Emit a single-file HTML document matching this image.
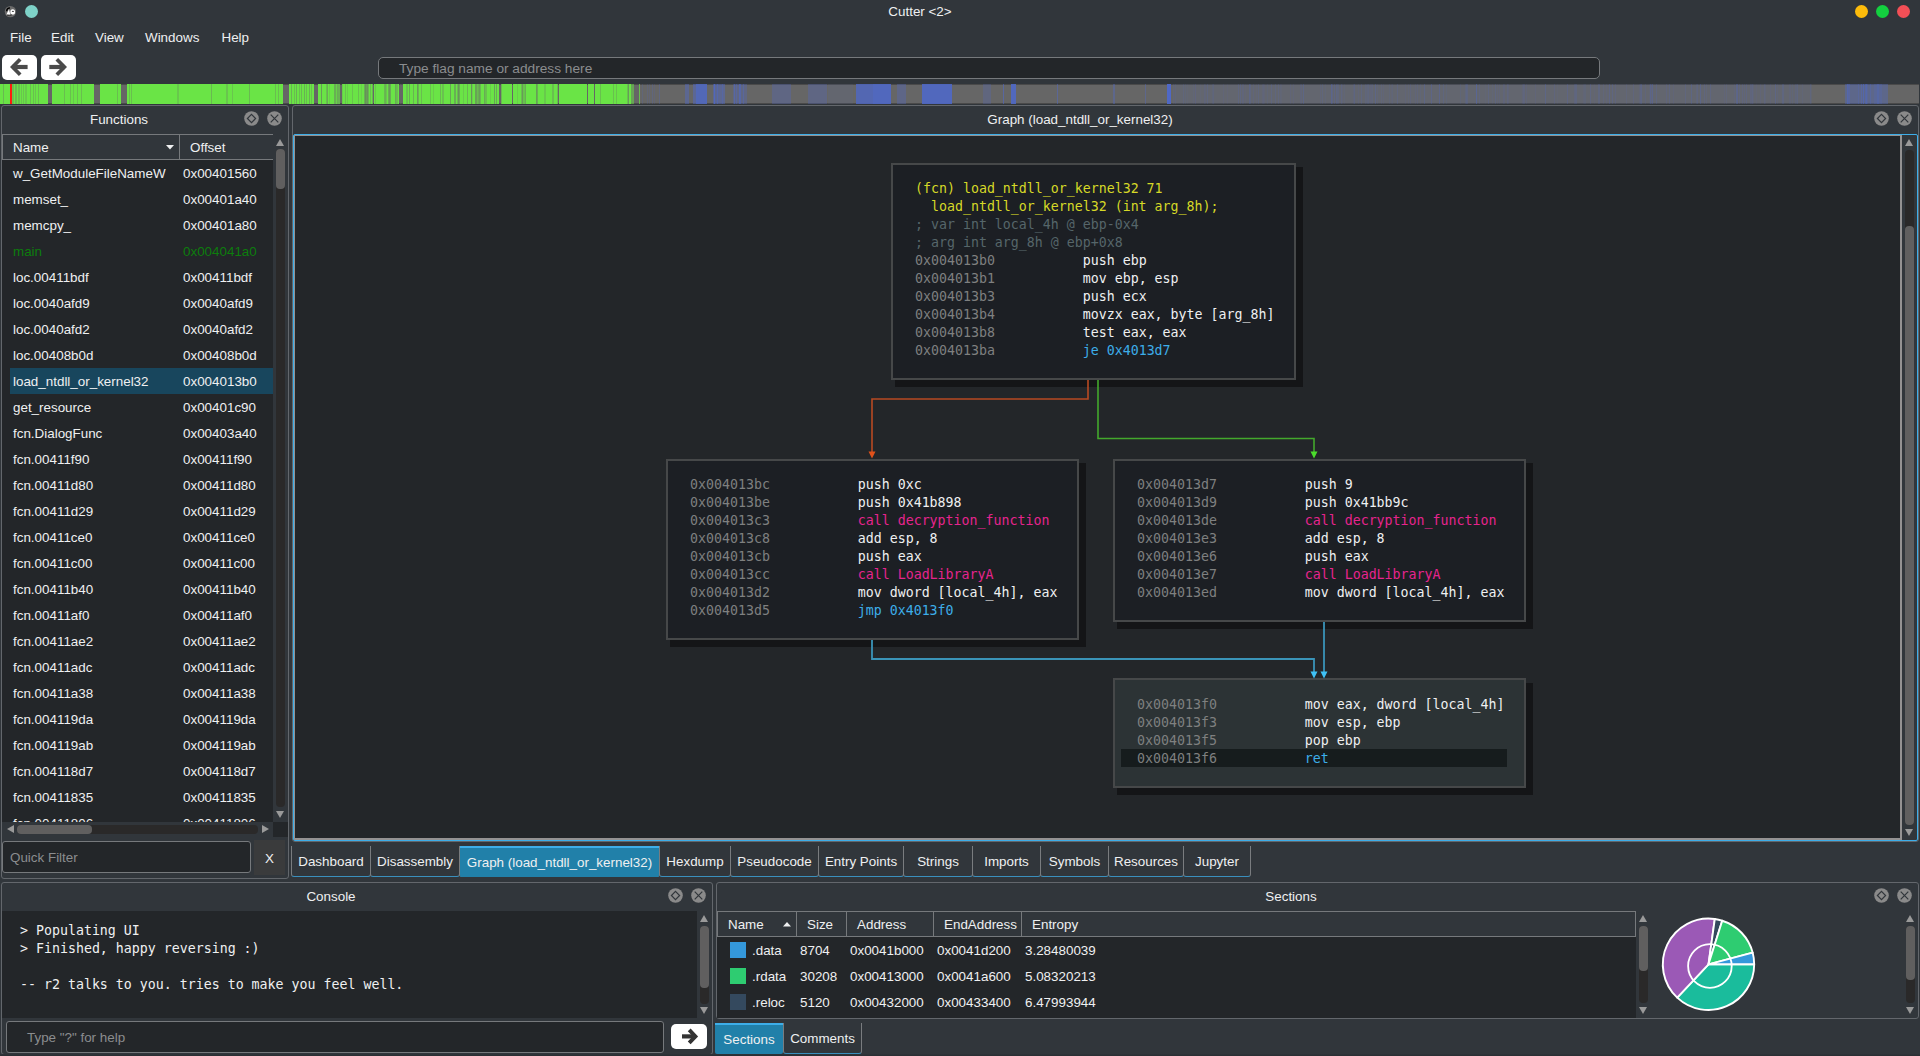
<!DOCTYPE html>
<html><head><meta charset="utf-8"><title>Cutter</title><style>
html,body{margin:0;padding:0;}
body{width:1920px;height:1056px;overflow:hidden;background:#31363b;color:#eff0f1;font-family:"Liberation Sans",sans-serif;font-size:13.4px;position:relative;}
.a{position:absolute;white-space:nowrap;}
.t{position:absolute;white-space:nowrap;line-height:16px;height:16px;}
.mono{font-family:"Liberation Mono",monospace;font-size:13.333px;}
.dock{position:absolute;border:1px solid #63676c;border-radius:3px;box-sizing:border-box;}
.hdr{position:absolute;box-sizing:border-box;border:1px solid #76797c;background:#31363b;height:26px;}
.ico{position:absolute;width:15px;height:15px;}
.sbv{position:absolute;width:9px;background:#2a2929;border-radius:4px;}
.sbh{position:absolute;width:9px;background:#605f5f;border-radius:4px;}
.tab{position:absolute;top:846px;height:31px;box-sizing:border-box;border:1px solid #797c7f;border-top:none;border-bottom:1px solid #3a8fbd;border-radius:0 0 3px 3px;text-align:center;line-height:31px;}
.tab.sel{background:#2180a9;border:none;border-top:2px solid #3daee9;line-height:29px;border-radius:0 0 2px 2px;height:31px}
.blk{position:absolute;box-sizing:border-box;border:2px solid #464849;background:#1c1f24;}
.shd{position:absolute;background:#141517;}
.ln{position:absolute;white-space:pre;line-height:18px;height:18px;font-family:"DejaVu Sans Mono","Liberation Mono",monospace;font-size:13.289px;}
.ad{color:#7f8080;} .y{color:#d6d927;} .cm{color:#56666a;} .w{color:#eff0f1;} .bl{color:#3daee9;} .pk{color:#e6248e;}
</style></head><body>
<svg class="a" style="left:4px;top:5px" width="13" height="13" viewBox="0 0 13 13"><circle cx="6.4" cy="6.6" r="5.7" fill="#6a6a6a"/><path d="M2.6 6.2 A3.6 3.6 0 0 1 6 2.9" stroke="#000" stroke-width="1.4" fill="none"/><path d="M2.4 9.4 L4.9 4.2 L6.3 9.6 Z" fill="#fff"/><ellipse cx="8.7" cy="6.9" rx="2.4" ry="2.7" fill="#fff"/><ellipse cx="8.9" cy="6.4" rx="1.1" ry="0.6" fill="#555"/><path d="M3 10.2 Q6 11.2 8 9.8" stroke="#3a3a3a" stroke-width="1" fill="none"/></svg>
<div class="a" style="left:25px;top:5px;width:13.4px;height:13.4px;border-radius:50%;background:#7ed2c8"></div>
<div class="t" style="left:820px;width:200px;text-align:center;top:4px;">Cutter &lt;2&gt;</div>
<div class="a" style="left:1854.75px;top:4.75px;width:13.5px;height:13.5px;border-radius:50%;background:#fdbc0b"></div>
<div class="a" style="left:1875.75px;top:4.75px;width:13.5px;height:13.5px;border-radius:50%;background:#13d03f"></div>
<div class="a" style="left:1896.75px;top:4.75px;width:13.5px;height:13.5px;border-radius:50%;background:#f34f56"></div>
<div class="t" style="left:10px;top:30px;">File</div>
<div class="t" style="left:51px;top:30px;">Edit</div>
<div class="t" style="left:95px;top:30px;">View</div>
<div class="t" style="left:145px;top:30px;">Windows</div>
<div class="t" style="left:221.5px;top:30px;">Help</div>
<div class="a" style="left:2px;top:55px;width:35px;height:25px;background:#fff;border-radius:5px;"><svg width="35" height="25" viewBox="0 0 35 25" style="position:absolute;left:0;top:0"><path d="M18.2 4.3 L10.6 12 L18.2 19.7" stroke="#4a4a4a" stroke-width="3.7" fill="none" stroke-linejoin="miter"/><path d="M10.5 12 H25.6" stroke="#4a4a4a" stroke-width="4.2" fill="none"/></svg></div>
<div class="a" style="left:41px;top:55px;width:35px;height:25px;background:#fff;border-radius:5px;"><svg width="35" height="25" viewBox="0 0 35 25" style="position:absolute;left:0;top:0"><path d="M15.8 4.3 L23.4 12 L15.8 19.7" stroke="#4a4a4a" stroke-width="3.7" fill="none" stroke-linejoin="miter"/><path d="M23.5 12 H8.3" stroke="#4a4a4a" stroke-width="4.2" fill="none"/></svg></div>
<div class="a" style="left:378px;top:57px;width:1222px;height:22px;box-sizing:border-box;border:1px solid #76797c;border-radius:5px;background:#232629;"></div>
<div class="t" style="left:399px;top:61px;color:#8b8d8f;font-size:13.7px">Type flag name or address here</div>
<div class="a" style="left:0;top:84px;width:1919px;height:20px;background:#666666;overflow:hidden">
<i class="a" style="left:0;top:0;width:1920px;height:1px;background:#4a4a4a"></i><i class="a" style="left:0;top:19px;width:1920px;height:1px;background:#4a4a4a"></i>
<i class="a" style="left:0px;top:0;width:48.3px;height:20px;background:#6ae446;opacity:1"></i>
<i class="a" style="left:52px;top:0;width:42.2px;height:20px;background:#6ae446;opacity:1"></i>
<i class="a" style="left:99.5px;top:0;width:21.3px;height:20px;background:#6ae446;opacity:1"></i>
<i class="a" style="left:127px;top:0;width:156.3px;height:20px;background:#6ae446;opacity:1"></i>
<i class="a" style="left:289.2px;top:0;width:24.8px;height:20px;background:#6ae446;opacity:1"></i>
<i class="a" style="left:317.5px;top:0;width:22.5px;height:20px;background:#6ae446;opacity:1"></i>
<i class="a" style="left:342px;top:0;width:30.5px;height:20px;background:#6ae446;opacity:1"></i>
<i class="a" style="left:374.3px;top:0;width:24.7px;height:20px;background:#6ae446;opacity:1"></i>
<i class="a" style="left:402.5px;top:0;width:96.5px;height:20px;background:#6ae446;opacity:1"></i>
<i class="a" style="left:501px;top:0;width:10.7px;height:20px;background:#6ae446;opacity:1"></i>
<i class="a" style="left:513px;top:0;width:45px;height:20px;background:#6ae446;opacity:1"></i>
<i class="a" style="left:559px;top:0;width:27.7px;height:20px;background:#6ae446;opacity:1"></i>
<i class="a" style="left:588px;top:0;width:5.7px;height:20px;background:#6ae446;opacity:1"></i>
<i class="a" style="left:595.2px;top:0;width:35.8px;height:20px;background:#6ae446;opacity:1"></i>
<i class="a" style="left:3.2px;top:0;width:0.7px;height:20px;background:#666666;opacity:0.35"></i>
<i class="a" style="left:12px;top:0;width:2px;height:20px;background:#666666;opacity:0.3"></i>
<i class="a" style="left:14.5px;top:0;width:0.8px;height:20px;background:#666666;opacity:0.35"></i>
<i class="a" style="left:16px;top:0;width:0.8px;height:20px;background:#666666;opacity:0.3"></i>
<i class="a" style="left:17.5px;top:0;width:1.0px;height:20px;background:#666666;opacity:0.3"></i>
<i class="a" style="left:19.2px;top:0;width:0.8px;height:20px;background:#666666;opacity:0.28"></i>
<i class="a" style="left:21px;top:0;width:1px;height:20px;background:#666666;opacity:0.25"></i>
<i class="a" style="left:22.8px;top:0;width:0.8px;height:20px;background:#666666;opacity:0.25"></i>
<i class="a" style="left:24.5px;top:0;width:0.8px;height:20px;background:#666666;opacity:0.2"></i>
<i class="a" style="left:26px;top:0;width:0.7px;height:20px;background:#666666;opacity:0.2"></i>
<i class="a" style="left:30px;top:0;width:0.6px;height:20px;background:#666666;opacity:0.3"></i>
<i class="a" style="left:33.2px;top:0;width:0.6px;height:20px;background:#666666;opacity:0.3"></i>
<i class="a" style="left:35px;top:0;width:0.6px;height:20px;background:#666666;opacity:0.25"></i>
<i class="a" style="left:38.3px;top:0;width:0.6px;height:20px;background:#666666;opacity:0.3"></i>
<i class="a" style="left:64px;top:0;width:0.6px;height:20px;background:#666666;opacity:0.3"></i>
<i class="a" style="left:69.5px;top:0;width:0.6px;height:20px;background:#666666;opacity:0.3"></i>
<i class="a" style="left:72.5px;top:0;width:0.6px;height:20px;background:#666666;opacity:0.25"></i>
<i class="a" style="left:76.5px;top:0;width:0.6px;height:20px;background:#666666;opacity:0.3"></i>
<i class="a" style="left:80.5px;top:0;width:0.6px;height:20px;background:#666666;opacity:0.3"></i>
<i class="a" style="left:116.5px;top:0;width:0.7px;height:20px;background:#666666;opacity:0.3"></i>
<i class="a" style="left:128.5px;top:0;width:0.6px;height:20px;background:#666666;opacity:0.3"></i>
<i class="a" style="left:131.3px;top:0;width:0.6px;height:20px;background:#666666;opacity:0.3"></i>
<i class="a" style="left:177px;top:0;width:2px;height:20px;background:#666666;opacity:0.22"></i>
<i class="a" style="left:210.8px;top:0;width:0.6px;height:20px;background:#666666;opacity:0.35"></i>
<i class="a" style="left:226.3px;top:0;width:1.8px;height:20px;background:#666666;opacity:0.25"></i>
<i class="a" style="left:232px;top:0;width:0.6px;height:20px;background:#666666;opacity:0.25"></i>
<i class="a" style="left:248.5px;top:0;width:0.6px;height:20px;background:#666666;opacity:0.35"></i>
<i class="a" style="left:274.5px;top:0;width:0.7px;height:20px;background:#666666;opacity:0.3"></i>
<i class="a" style="left:278px;top:0;width:0.6px;height:20px;background:#666666;opacity:0.3"></i>
<i class="a" style="left:291px;top:0;width:0.8px;height:20px;background:#666666;opacity:0.4"></i>
<i class="a" style="left:293.5px;top:0;width:0.8px;height:20px;background:#666666;opacity:0.3"></i>
<i class="a" style="left:296px;top:0;width:0.8px;height:20px;background:#666666;opacity:0.4"></i>
<i class="a" style="left:299px;top:0;width:0.8px;height:20px;background:#666666;opacity:0.3"></i>
<i class="a" style="left:301px;top:0;width:0.8px;height:20px;background:#666666;opacity:0.35"></i>
<i class="a" style="left:304px;top:0;width:0.8px;height:20px;background:#666666;opacity:0.4"></i>
<i class="a" style="left:306px;top:0;width:0.8px;height:20px;background:#666666;opacity:0.3"></i>
<i class="a" style="left:308.5px;top:0;width:0.8px;height:20px;background:#666666;opacity:0.4"></i>
<i class="a" style="left:311px;top:0;width:0.8px;height:20px;background:#666666;opacity:0.3"></i>
<i class="a" style="left:366.8px;top:0;width:0.8px;height:20px;background:#666666;opacity:0.35"></i>
<i class="a" style="left:486.3px;top:0;width:0.6px;height:20px;background:#666666;opacity:0.26"></i>
<i class="a" style="left:477.5px;top:0;width:0.6px;height:20px;background:#666666;opacity:0.16"></i>
<i class="a" style="left:341.7px;top:0;width:0.9px;height:20px;background:#666666;opacity:0.18"></i>
<i class="a" style="left:389.3px;top:0;width:0.6px;height:20px;background:#666666;opacity:0.34"></i>
<i class="a" style="left:498.6px;top:0;width:1.5px;height:20px;background:#666666;opacity:0.27"></i>
<i class="a" style="left:334.4px;top:0;width:1.6px;height:20px;background:#666666;opacity:0.41"></i>
<i class="a" style="left:364.7px;top:0;width:0.9px;height:20px;background:#666666;opacity:0.19"></i>
<i class="a" style="left:500.5px;top:0;width:0.7px;height:20px;background:#666666;opacity:0.34"></i>
<i class="a" style="left:489.9px;top:0;width:0.9px;height:20px;background:#666666;opacity:0.17"></i>
<i class="a" style="left:383.9px;top:0;width:0.6px;height:20px;background:#666666;opacity:0.35"></i>
<i class="a" style="left:417.4px;top:0;width:1.0px;height:20px;background:#666666;opacity:0.33"></i>
<i class="a" style="left:412.9px;top:0;width:1.0px;height:20px;background:#666666;opacity:0.39"></i>
<i class="a" style="left:395.6px;top:0;width:1.3px;height:20px;background:#666666;opacity:0.32"></i>
<i class="a" style="left:409.2px;top:0;width:1.3px;height:20px;background:#666666;opacity:0.44"></i>
<i class="a" style="left:449.8px;top:0;width:0.6px;height:20px;background:#666666;opacity:0.38"></i>
<i class="a" style="left:471.7px;top:0;width:0.7px;height:20px;background:#666666;opacity:0.16"></i>
<i class="a" style="left:556.8px;top:0;width:1.3px;height:20px;background:#666666;opacity:0.32"></i>
<i class="a" style="left:417.1px;top:0;width:1.5px;height:20px;background:#666666;opacity:0.36"></i>
<i class="a" style="left:499.7px;top:0;width:1.1px;height:20px;background:#666666;opacity:0.29"></i>
<i class="a" style="left:612.5px;top:0;width:1.4px;height:20px;background:#666666;opacity:0.29"></i>
<i class="a" style="left:338.8px;top:0;width:1.2px;height:20px;background:#666666;opacity:0.36"></i>
<i class="a" style="left:627.6px;top:0;width:1.3px;height:20px;background:#666666;opacity:0.4"></i>
<i class="a" style="left:439.7px;top:0;width:0.8px;height:20px;background:#666666;opacity:0.35"></i>
<i class="a" style="left:463.3px;top:0;width:0.6px;height:20px;background:#666666;opacity:0.2"></i>
<i class="a" style="left:338.3px;top:0;width:0.6px;height:20px;background:#666666;opacity:0.38"></i>
<i class="a" style="left:396.8px;top:0;width:0.7px;height:20px;background:#666666;opacity:0.27"></i>
<i class="a" style="left:344.9px;top:0;width:1.5px;height:20px;background:#666666;opacity:0.28"></i>
<i class="a" style="left:593.8px;top:0;width:1.1px;height:20px;background:#666666;opacity:0.4"></i>
<i class="a" style="left:406.2px;top:0;width:1.4px;height:20px;background:#666666;opacity:0.27"></i>
<i class="a" style="left:594.2px;top:0;width:0.9px;height:20px;background:#666666;opacity:0.44"></i>
<i class="a" style="left:374.7px;top:0;width:0.7px;height:20px;background:#666666;opacity:0.22"></i>
<i class="a" style="left:470.5px;top:0;width:0.7px;height:20px;background:#666666;opacity:0.33"></i>
<i class="a" style="left:321.3px;top:0;width:0.8px;height:20px;background:#666666;opacity:0.28"></i>
<i class="a" style="left:495.6px;top:0;width:0.9px;height:20px;background:#666666;opacity:0.44"></i>
<i class="a" style="left:479.7px;top:0;width:1.2px;height:20px;background:#666666;opacity:0.34"></i>
<i class="a" style="left:336.7px;top:0;width:1.3px;height:20px;background:#666666;opacity:0.42"></i>
<i class="a" style="left:441.5px;top:0;width:1.4px;height:20px;background:#666666;opacity:0.27"></i>
<i class="a" style="left:516.9px;top:0;width:0.6px;height:20px;background:#666666;opacity:0.17"></i>
<i class="a" style="left:384.8px;top:0;width:0.6px;height:20px;background:#666666;opacity:0.2"></i>
<i class="a" style="left:336.3px;top:0;width:0.9px;height:20px;background:#666666;opacity:0.15"></i>
<i class="a" style="left:351.5px;top:0;width:0.7px;height:20px;background:#666666;opacity:0.26"></i>
<i class="a" style="left:366.0px;top:0;width:1.2px;height:20px;background:#666666;opacity:0.23"></i>
<i class="a" style="left:432.9px;top:0;width:0.9px;height:20px;background:#666666;opacity:0.19"></i>
<i class="a" style="left:627.4px;top:0;width:1.5px;height:20px;background:#666666;opacity:0.29"></i>
<i class="a" style="left:346.6px;top:0;width:1.1px;height:20px;background:#666666;opacity:0.18"></i>
<i class="a" style="left:402.1px;top:0;width:0.9px;height:20px;background:#666666;opacity:0.4"></i>
<i class="a" style="left:327.2px;top:0;width:0.6px;height:20px;background:#666666;opacity:0.44"></i>
<i class="a" style="left:365.4px;top:0;width:1.1px;height:20px;background:#666666;opacity:0.31"></i>
<i class="a" style="left:484.0px;top:0;width:0.5px;height:20px;background:#666666;opacity:0.44"></i>
<i class="a" style="left:535.5px;top:0;width:1.5px;height:20px;background:#666666;opacity:0.23"></i>
<i class="a" style="left:371.8px;top:0;width:0.9px;height:20px;background:#666666;opacity:0.38"></i>
<i class="a" style="left:389.2px;top:0;width:0.8px;height:20px;background:#666666;opacity:0.39"></i>
<i class="a" style="left:390.2px;top:0;width:1.3px;height:20px;background:#666666;opacity:0.31"></i>
<i class="a" style="left:329.0px;top:0;width:0.9px;height:20px;background:#666666;opacity:0.16"></i>
<i class="a" style="left:400.4px;top:0;width:0.8px;height:20px;background:#666666;opacity:0.36"></i>
<i class="a" style="left:458.4px;top:0;width:1.5px;height:20px;background:#666666;opacity:0.43"></i>
<i class="a" style="left:615.5px;top:0;width:1.6px;height:20px;background:#666666;opacity:0.26"></i>
<i class="a" style="left:390.4px;top:0;width:0.7px;height:20px;background:#666666;opacity:0.21"></i>
<i class="a" style="left:522.4px;top:0;width:1.0px;height:20px;background:#666666;opacity:0.39"></i>
<i class="a" style="left:525.1px;top:0;width:0.5px;height:20px;background:#666666;opacity:0.42"></i>
<i class="a" style="left:552.3px;top:0;width:1.3px;height:20px;background:#666666;opacity:0.29"></i>
<i class="a" style="left:442.5px;top:0;width:1.6px;height:20px;background:#666666;opacity:0.27"></i>
<i class="a" style="left:544.3px;top:0;width:1.5px;height:20px;background:#666666;opacity:0.2"></i>
<i class="a" style="left:366.9px;top:0;width:0.7px;height:20px;background:#666666;opacity:0.42"></i>
<i class="a" style="left:365.3px;top:0;width:1.3px;height:20px;background:#666666;opacity:0.4"></i>
<i class="a" style="left:523.4px;top:0;width:1.6px;height:20px;background:#666666;opacity:0.26"></i>
<i class="a" style="left:360.6px;top:0;width:1.1px;height:20px;background:#666666;opacity:0.15"></i>
<i class="a" style="left:521.0px;top:0;width:1.6px;height:20px;background:#666666;opacity:0.31"></i>
<i class="a" style="left:454.3px;top:0;width:1.5px;height:20px;background:#666666;opacity:0.41"></i>
<i class="a" style="left:385.3px;top:0;width:1.4px;height:20px;background:#666666;opacity:0.23"></i>
<i class="a" style="left:394.6px;top:0;width:0.8px;height:20px;background:#666666;opacity:0.33"></i>
<i class="a" style="left:450.0px;top:0;width:0.8px;height:20px;background:#666666;opacity:0.19"></i>
<i class="a" style="left:429.5px;top:0;width:1.5px;height:20px;background:#666666;opacity:0.29"></i>
<i class="a" style="left:600.2px;top:0;width:1.1px;height:20px;background:#666666;opacity:0.28"></i>
<i class="a" style="left:475.3px;top:0;width:1.5px;height:20px;background:#666666;opacity:0.31"></i>
<i class="a" style="left:325.8px;top:0;width:1.1px;height:20px;background:#666666;opacity:0.28"></i>
<i class="a" style="left:321.2px;top:0;width:0.7px;height:20px;background:#666666;opacity:0.39"></i>
<i class="a" style="left:466.9px;top:0;width:0.7px;height:20px;background:#666666;opacity:0.37"></i>
<i class="a" style="left:421.0px;top:0;width:1.1px;height:20px;background:#666666;opacity:0.31"></i>
<i class="a" style="left:493.9px;top:0;width:0.6px;height:20px;background:#666666;opacity:0.22"></i>
<i class="a" style="left:494.1px;top:0;width:1.1px;height:20px;background:#666666;opacity:0.38"></i>
<i class="a" style="left:457.2px;top:0;width:1.5px;height:20px;background:#666666;opacity:0.33"></i>
<i class="a" style="left:478.7px;top:0;width:1.1px;height:20px;background:#666666;opacity:0.36"></i>
<i class="a" style="left:485.3px;top:0;width:1.0px;height:20px;background:#666666;opacity:0.29"></i>
<i class="a" style="left:536.4px;top:0;width:1.5px;height:20px;background:#666666;opacity:0.41"></i>
<i class="a" style="left:400.3px;top:0;width:1.6px;height:20px;background:#666666;opacity:0.32"></i>
<i class="a" style="left:357.7px;top:0;width:0.7px;height:20px;background:#666666;opacity:0.28"></i>
<i class="a" style="left:394.7px;top:0;width:0.6px;height:20px;background:#666666;opacity:0.17"></i>
<i class="a" style="left:367.8px;top:0;width:1.5px;height:20px;background:#666666;opacity:0.36"></i>
<i class="a" style="left:364.3px;top:0;width:1.2px;height:20px;background:#666666;opacity:0.41"></i>
<i class="a" style="left:387.9px;top:0;width:1.6px;height:20px;background:#666666;opacity:0.44"></i>
<i class="a" style="left:471.1px;top:0;width:0.9px;height:20px;background:#666666;opacity:0.45"></i>
<i class="a" style="left:370.0px;top:0;width:1.4px;height:20px;background:#666666;opacity:0.28"></i>
<i class="a" style="left:475px;top:0;width:5px;height:20px;background:#666666;opacity:0.3"></i>
<i class="a" style="left:10px;top:0;width:1.5px;height:20px;background:#ff1a0d;opacity:1"></i>
<i class="a" style="left:631px;top:0;width:3px;height:20px;background:#6ae446;opacity:0.5"></i>
<i class="a" style="left:639px;top:0;width:0.6px;height:20px;background:#6ae446;opacity:0.7"></i>
<i class="a" style="left:685px;top:0;width:4px;height:20px;background:#4f68c6;opacity:0.45"></i>
<i class="a" style="left:693px;top:0;width:3px;height:20px;background:#4f68c6;opacity:0.5"></i>
<i class="a" style="left:696px;top:0;width:10.7px;height:20px;background:#4f68c6;opacity:0.85"></i>
<i class="a" style="left:713px;top:0;width:12px;height:20px;background:#4f68c6;opacity:0.45"></i>
<i class="a" style="left:733px;top:0;width:14px;height:20px;background:#4f68c6;opacity:0.3"></i>
<i class="a" style="left:772px;top:0;width:19px;height:20px;background:#4f68c6;opacity:0.3"></i>
<i class="a" style="left:808px;top:0;width:19px;height:20px;background:#4f68c6;opacity:0.3"></i>
<i class="a" style="left:856px;top:0;width:17px;height:20px;background:#4f68c6;opacity:0.8"></i>
<i class="a" style="left:873px;top:0;width:18px;height:20px;background:#4f68c6;opacity:0.9"></i>
<i class="a" style="left:897px;top:0;width:9px;height:20px;background:#4f68c6;opacity:0.35"></i>
<i class="a" style="left:922px;top:0;width:30px;height:20px;background:#4f68c6;opacity:0.9"></i>
<i class="a" style="left:983px;top:0;width:8px;height:20px;background:#4f68c6;opacity:0.25"></i>
<i class="a" style="left:1002.5px;top:0;width:1.0px;height:20px;background:#4f68c6;opacity:0.6"></i>
<i class="a" style="left:1010.5px;top:0;width:5.5px;height:20px;background:#4f68c6;opacity:0.9"></i>
<i class="a" style="left:1057px;top:0;width:1px;height:20px;background:#4f68c6;opacity:0.5"></i>
<i class="a" style="left:1113px;top:0;width:2px;height:20px;background:#4f68c6;opacity:0.4"></i>
<i class="a" style="left:1145px;top:0;width:1px;height:20px;background:#4f68c6;opacity:0.4"></i>
<i class="a" style="left:1167px;top:0;width:4px;height:20px;background:#4f68c6;opacity:1.0"></i>
<i class="a" style="left:1845px;top:0;width:43px;height:20px;background:#4f68c6;opacity:0.38"></i>
<i class="a" style="left:1874px;top:0;width:8px;height:20px;background:#4f68c6;opacity:0.2"></i>
<i class="a" style="left:646.5px;top:0;width:0.8px;height:20px;background:#4f68c6;opacity:0.18"></i>
<i class="a" style="left:654.0px;top:0;width:0.6px;height:20px;background:#4f68c6;opacity:0.15"></i>
<i class="a" style="left:648.5px;top:0;width:0.7px;height:20px;background:#4f68c6;opacity:0.15"></i>
<i class="a" style="left:652.1px;top:0;width:0.6px;height:20px;background:#4f68c6;opacity:0.23"></i>
<i class="a" style="left:659.2px;top:0;width:0.5px;height:20px;background:#4f68c6;opacity:0.27"></i>
<i class="a" style="left:642.0px;top:0;width:1.0px;height:20px;background:#4f68c6;opacity:0.19"></i>
<i class="a" style="left:743.4px;top:0;width:0.6px;height:20px;background:#4f68c6;opacity:0.38"></i>
<i class="a" style="left:738.6px;top:0;width:0.7px;height:20px;background:#4f68c6;opacity:0.57"></i>
<i class="a" style="left:736.3px;top:0;width:1.1px;height:20px;background:#4f68c6;opacity:0.34"></i>
<i class="a" style="left:740.3px;top:0;width:1.2px;height:20px;background:#4f68c6;opacity:0.51"></i>
<i class="a" style="left:733.8px;top:0;width:0.6px;height:20px;background:#4f68c6;opacity:0.51"></i>
<i class="a" style="left:713.8px;top:0;width:0.9px;height:20px;background:#4f68c6;opacity:0.58"></i>
<i class="a" style="left:721.8px;top:0;width:1.0px;height:20px;background:#4f68c6;opacity:0.33"></i>
<i class="a" style="left:713.7px;top:0;width:1.1px;height:20px;background:#4f68c6;opacity:0.56"></i>
<i class="a" style="left:716.8px;top:0;width:0.8px;height:20px;background:#4f68c6;opacity:0.47"></i>
<i class="a" style="left:1173px;top:0;width:639px;height:20px;background:#4f68c6;opacity:0.1"></i>
<i class="a" style="left:828px;top:0;width:25px;height:20px;background:#4f68c6;opacity:0.1"></i>
<i class="a" style="left:1343.8px;top:0;width:1.3px;height:20px;background:#4f68c6;opacity:0.08"></i>
<i class="a" style="left:1325.1px;top:0;width:1.0px;height:20px;background:#4f68c6;opacity:0.08"></i>
<i class="a" style="left:1205.2px;top:0;width:0.6px;height:20px;background:#4f68c6;opacity:0.09"></i>
<i class="a" style="left:1367.7px;top:0;width:0.7px;height:20px;background:#4f68c6;opacity:0.17"></i>
<i class="a" style="left:1492.2px;top:0;width:0.7px;height:20px;background:#4f68c6;opacity:0.08"></i>
<i class="a" style="left:1184.6px;top:0;width:0.8px;height:20px;background:#4f68c6;opacity:0.1"></i>
<i class="a" style="left:1641.1px;top:0;width:0.5px;height:20px;background:#4f68c6;opacity:0.14"></i>
<i class="a" style="left:1476.1px;top:0;width:0.6px;height:20px;background:#4f68c6;opacity:0.19"></i>
<i class="a" style="left:1695.8px;top:0;width:0.6px;height:20px;background:#4f68c6;opacity:0.12"></i>
<i class="a" style="left:1705.6px;top:0;width:0.9px;height:20px;background:#4f68c6;opacity:0.12"></i>
<i class="a" style="left:1611.8px;top:0;width:0.9px;height:20px;background:#4f68c6;opacity:0.2"></i>
<i class="a" style="left:1704.2px;top:0;width:0.8px;height:20px;background:#4f68c6;opacity:0.16"></i>
<i class="a" style="left:1431.2px;top:0;width:1.0px;height:20px;background:#4f68c6;opacity:0.11"></i>
<i class="a" style="left:1255.9px;top:0;width:0.5px;height:20px;background:#4f68c6;opacity:0.07"></i>
<i class="a" style="left:1336.0px;top:0;width:1.1px;height:20px;background:#4f68c6;opacity:0.08"></i>
<i class="a" style="left:1710.1px;top:0;width:0.6px;height:20px;background:#4f68c6;opacity:0.18"></i>
<i class="a" style="left:1352.9px;top:0;width:1.0px;height:20px;background:#4f68c6;opacity:0.09"></i>
<i class="a" style="left:1466.3px;top:0;width:0.7px;height:20px;background:#4f68c6;opacity:0.08"></i>
<i class="a" style="left:1341.0px;top:0;width:0.8px;height:20px;background:#4f68c6;opacity:0.19"></i>
<i class="a" style="left:1521.9px;top:0;width:1.3px;height:20px;background:#4f68c6;opacity:0.09"></i>
<i class="a" style="left:1370.4px;top:0;width:1.3px;height:20px;background:#4f68c6;opacity:0.11"></i>
<i class="a" style="left:1416.7px;top:0;width:0.5px;height:20px;background:#4f68c6;opacity:0.13"></i>
<i class="a" style="left:1301.2px;top:0;width:0.9px;height:20px;background:#4f68c6;opacity:0.13"></i>
<i class="a" style="left:1341.7px;top:0;width:0.5px;height:20px;background:#4f68c6;opacity:0.07"></i>
<i class="a" style="left:1199.6px;top:0;width:0.8px;height:20px;background:#4f68c6;opacity:0.06"></i>
<i class="a" style="left:1321.6px;top:0;width:0.7px;height:20px;background:#4f68c6;opacity:0.14"></i>
<i class="a" style="left:1651.9px;top:0;width:0.9px;height:20px;background:#4f68c6;opacity:0.15"></i>
<i class="a" style="left:1733.8px;top:0;width:1.1px;height:20px;background:#4f68c6;opacity:0.11"></i>
<i class="a" style="left:1801.5px;top:0;width:0.8px;height:20px;background:#4f68c6;opacity:0.08"></i>
<i class="a" style="left:1583.3px;top:0;width:1.1px;height:20px;background:#4f68c6;opacity:0.07"></i>
<i class="a" style="left:1741.9px;top:0;width:1.2px;height:20px;background:#4f68c6;opacity:0.15"></i>
<i class="a" style="left:1691.1px;top:0;width:1.1px;height:20px;background:#4f68c6;opacity:0.08"></i>
<i class="a" style="left:1494.8px;top:0;width:0.9px;height:20px;background:#4f68c6;opacity:0.18"></i>
<i class="a" style="left:1700.1px;top:0;width:1.2px;height:20px;background:#4f68c6;opacity:0.14"></i>
<i class="a" style="left:1608.5px;top:0;width:1.3px;height:20px;background:#4f68c6;opacity:0.16"></i>
<i class="a" style="left:1192.9px;top:0;width:0.7px;height:20px;background:#4f68c6;opacity:0.08"></i>
<i class="a" style="left:1240.0px;top:0;width:0.7px;height:20px;background:#4f68c6;opacity:0.18"></i>
<i class="a" style="left:1573.5px;top:0;width:1.0px;height:20px;background:#4f68c6;opacity:0.15"></i>
<i class="a" style="left:1485.1px;top:0;width:1.1px;height:20px;background:#4f68c6;opacity:0.06"></i>
<i class="a" style="left:1650.3px;top:0;width:1.1px;height:20px;background:#4f68c6;opacity:0.13"></i>
<i class="a" style="left:1593.7px;top:0;width:0.9px;height:20px;background:#4f68c6;opacity:0.07"></i>
<i class="a" style="left:1333.9px;top:0;width:1.1px;height:20px;background:#4f68c6;opacity:0.07"></i>
<i class="a" style="left:1638.5px;top:0;width:0.7px;height:20px;background:#4f68c6;opacity:0.09"></i>
<i class="a" style="left:1795.4px;top:0;width:1.1px;height:20px;background:#4f68c6;opacity:0.13"></i>
<i class="a" style="left:1478.7px;top:0;width:0.8px;height:20px;background:#4f68c6;opacity:0.16"></i>
<i class="a" style="left:1566.6px;top:0;width:1.1px;height:20px;background:#4f68c6;opacity:0.15"></i>
<i class="a" style="left:1267.1px;top:0;width:0.6px;height:20px;background:#4f68c6;opacity:0.1"></i>
<i class="a" style="left:1367.2px;top:0;width:1.1px;height:20px;background:#4f68c6;opacity:0.14"></i>
<i class="a" style="left:1211.7px;top:0;width:0.5px;height:20px;background:#4f68c6;opacity:0.1"></i>
<i class="a" style="left:1614.6px;top:0;width:1.0px;height:20px;background:#4f68c6;opacity:0.15"></i>
<i class="a" style="left:1502.7px;top:0;width:0.7px;height:20px;background:#4f68c6;opacity:0.13"></i>
<i class="a" style="left:1248.6px;top:0;width:0.9px;height:20px;background:#4f68c6;opacity:0.19"></i>
<i class="a" style="left:1797.4px;top:0;width:0.6px;height:20px;background:#4f68c6;opacity:0.19"></i>
<i class="a" style="left:1466.0px;top:0;width:0.6px;height:20px;background:#4f68c6;opacity:0.17"></i>
<i class="a" style="left:1459.6px;top:0;width:1.3px;height:20px;background:#4f68c6;opacity:0.1"></i>
<i class="a" style="left:1776.6px;top:0;width:0.7px;height:20px;background:#4f68c6;opacity:0.09"></i>
<i class="a" style="left:1263.4px;top:0;width:1.0px;height:20px;background:#4f68c6;opacity:0.13"></i>
<i class="a" style="left:1257.6px;top:0;width:1.2px;height:20px;background:#4f68c6;opacity:0.17"></i>
<i class="a" style="left:1738.9px;top:0;width:0.9px;height:20px;background:#4f68c6;opacity:0.16"></i>
<i class="a" style="left:1746.0px;top:0;width:0.7px;height:20px;background:#4f68c6;opacity:0.13"></i>
<i class="a" style="left:1175.3px;top:0;width:0.5px;height:20px;background:#4f68c6;opacity:0.13"></i>
<i class="a" style="left:1365.7px;top:0;width:0.8px;height:20px;background:#4f68c6;opacity:0.08"></i>
<i class="a" style="left:1374.7px;top:0;width:0.8px;height:20px;background:#4f68c6;opacity:0.18"></i>
<i class="a" style="left:1652.3px;top:0;width:0.5px;height:20px;background:#4f68c6;opacity:0.18"></i>
<i class="a" style="left:1764.4px;top:0;width:0.6px;height:20px;background:#4f68c6;opacity:0.16"></i>
<i class="a" style="left:1357.8px;top:0;width:1.3px;height:20px;background:#4f68c6;opacity:0.11"></i>
<i class="a" style="left:1810.4px;top:0;width:0.8px;height:20px;background:#4f68c6;opacity:0.14"></i>
<i class="a" style="left:1446.2px;top:0;width:0.8px;height:20px;background:#4f68c6;opacity:0.1"></i>
<i class="a" style="left:1237.9px;top:0;width:0.6px;height:20px;background:#4f68c6;opacity:0.18"></i>
<i class="a" style="left:1770.2px;top:0;width:0.7px;height:20px;background:#4f68c6;opacity:0.09"></i>
<i class="a" style="left:1499.1px;top:0;width:0.8px;height:20px;background:#4f68c6;opacity:0.09"></i>
<i class="a" style="left:1783.2px;top:0;width:0.8px;height:20px;background:#4f68c6;opacity:0.18"></i>
<i class="a" style="left:1575.4px;top:0;width:1.2px;height:20px;background:#4f68c6;opacity:0.19"></i>
<i class="a" style="left:1523.3px;top:0;width:1.2px;height:20px;background:#4f68c6;opacity:0.16"></i>
<i class="a" style="left:1640.6px;top:0;width:0.5px;height:20px;background:#4f68c6;opacity:0.12"></i>
<i class="a" style="left:1584.1px;top:0;width:1.1px;height:20px;background:#4f68c6;opacity:0.1"></i>
<i class="a" style="left:1764.7px;top:0;width:0.6px;height:20px;background:#4f68c6;opacity:0.08"></i>
<i class="a" style="left:1392.3px;top:0;width:0.9px;height:20px;background:#4f68c6;opacity:0.1"></i>
<i class="a" style="left:1795.8px;top:0;width:1.1px;height:20px;background:#4f68c6;opacity:0.1"></i>
<i class="a" style="left:1364.9px;top:0;width:1.1px;height:20px;background:#4f68c6;opacity:0.14"></i>
<i class="a" style="left:1279.8px;top:0;width:0.8px;height:20px;background:#4f68c6;opacity:0.08"></i>
<i class="a" style="left:1751.3px;top:0;width:0.7px;height:20px;background:#4f68c6;opacity:0.13"></i>
<i class="a" style="left:1751.5px;top:0;width:0.7px;height:20px;background:#4f68c6;opacity:0.2"></i>
<i class="a" style="left:1262.1px;top:0;width:0.8px;height:20px;background:#4f68c6;opacity:0.09"></i>
<i class="a" style="left:1391.3px;top:0;width:0.6px;height:20px;background:#4f68c6;opacity:0.07"></i>
<i class="a" style="left:1337.9px;top:0;width:0.7px;height:20px;background:#4f68c6;opacity:0.14"></i>
<i class="a" style="left:1651.1px;top:0;width:1.2px;height:20px;background:#4f68c6;opacity:0.12"></i>
<i class="a" style="left:1507.5px;top:0;width:0.8px;height:20px;background:#4f68c6;opacity:0.11"></i>
<i class="a" style="left:1212.6px;top:0;width:0.8px;height:20px;background:#4f68c6;opacity:0.1"></i>
<i class="a" style="left:1253.3px;top:0;width:1.2px;height:20px;background:#4f68c6;opacity:0.13"></i>
<i class="a" style="left:1723.5px;top:0;width:1.0px;height:20px;background:#4f68c6;opacity:0.09"></i>
<i class="a" style="left:1331.6px;top:0;width:0.7px;height:20px;background:#4f68c6;opacity:0.12"></i>
<i class="a" style="left:1781.8px;top:0;width:0.8px;height:20px;background:#4f68c6;opacity:0.18"></i>
<i class="a" style="left:1186.9px;top:0;width:1.2px;height:20px;background:#4f68c6;opacity:0.06"></i>
<i class="a" style="left:1744.4px;top:0;width:1.1px;height:20px;background:#4f68c6;opacity:0.13"></i>
<i class="a" style="left:1173.1px;top:0;width:1.0px;height:20px;background:#4f68c6;opacity:0.11"></i>
<i class="a" style="left:1699.5px;top:0;width:1.3px;height:20px;background:#4f68c6;opacity:0.18"></i>
<i class="a" style="left:1331.5px;top:0;width:1.2px;height:20px;background:#4f68c6;opacity:0.08"></i>
<i class="a" style="left:1506.5px;top:0;width:0.6px;height:20px;background:#4f68c6;opacity:0.16"></i>
<i class="a" style="left:1633.3px;top:0;width:1.2px;height:20px;background:#4f68c6;opacity:0.15"></i>
<i class="a" style="left:1464.7px;top:0;width:1.1px;height:20px;background:#4f68c6;opacity:0.14"></i>
<i class="a" style="left:1672.5px;top:0;width:0.5px;height:20px;background:#4f68c6;opacity:0.09"></i>
<i class="a" style="left:1584.7px;top:0;width:1.2px;height:20px;background:#4f68c6;opacity:0.1"></i>
<i class="a" style="left:1333.7px;top:0;width:0.6px;height:20px;background:#4f68c6;opacity:0.15"></i>
<i class="a" style="left:1244.5px;top:0;width:1.1px;height:20px;background:#4f68c6;opacity:0.07"></i>
<i class="a" style="left:1544.9px;top:0;width:1.0px;height:20px;background:#4f68c6;opacity:0.11"></i>
<i class="a" style="left:1556.7px;top:0;width:0.6px;height:20px;background:#4f68c6;opacity:0.06"></i>
<i class="a" style="left:1467.0px;top:0;width:0.8px;height:20px;background:#4f68c6;opacity:0.19"></i>
<i class="a" style="left:1736.8px;top:0;width:1.0px;height:20px;background:#4f68c6;opacity:0.13"></i>
<i class="a" style="left:1330.7px;top:0;width:0.7px;height:20px;background:#4f68c6;opacity:0.19"></i>
<i class="a" style="left:1369.1px;top:0;width:1.1px;height:20px;background:#4f68c6;opacity:0.06"></i>
<i class="a" style="left:1603.4px;top:0;width:0.9px;height:20px;background:#4f68c6;opacity:0.12"></i>
<i class="a" style="left:1599.0px;top:0;width:0.7px;height:20px;background:#4f68c6;opacity:0.19"></i>
<i class="a" style="left:1194.8px;top:0;width:0.6px;height:20px;background:#4f68c6;opacity:0.11"></i>
<i class="a" style="left:1608.6px;top:0;width:0.8px;height:20px;background:#4f68c6;opacity:0.09"></i>
<i class="a" style="left:1644.5px;top:0;width:1.1px;height:20px;background:#4f68c6;opacity:0.13"></i>
<i class="a" style="left:1792.1px;top:0;width:0.7px;height:20px;background:#4f68c6;opacity:0.1"></i>
<i class="a" style="left:1320.2px;top:0;width:1.2px;height:20px;background:#4f68c6;opacity:0.09"></i>
<i class="a" style="left:1361.1px;top:0;width:1.1px;height:20px;background:#4f68c6;opacity:0.19"></i>
<i class="a" style="left:1292.5px;top:0;width:0.9px;height:20px;background:#4f68c6;opacity:0.09"></i>
<i class="a" style="left:1597.6px;top:0;width:0.8px;height:20px;background:#4f68c6;opacity:0.19"></i>
<i class="a" style="left:1424.2px;top:0;width:0.6px;height:20px;background:#4f68c6;opacity:0.09"></i>
<i class="a" style="left:1263.5px;top:0;width:1.3px;height:20px;background:#4f68c6;opacity:0.07"></i>
<i class="a" style="left:1424.1px;top:0;width:0.6px;height:20px;background:#4f68c6;opacity:0.19"></i>
<i class="a" style="left:1640.3px;top:0;width:1.2px;height:20px;background:#4f68c6;opacity:0.2"></i>
<i class="a" style="left:1383.0px;top:0;width:1.2px;height:20px;background:#4f68c6;opacity:0.09"></i>
<i class="a" style="left:1649.0px;top:0;width:1.2px;height:20px;background:#4f68c6;opacity:0.06"></i>
<i class="a" style="left:1414.5px;top:0;width:1.1px;height:20px;background:#4f68c6;opacity:0.11"></i>
<i class="a" style="left:1281.0px;top:0;width:0.8px;height:20px;background:#4f68c6;opacity:0.06"></i>
<i class="a" style="left:1397.3px;top:0;width:0.8px;height:20px;background:#4f68c6;opacity:0.19"></i>
<i class="a" style="left:1788.6px;top:0;width:0.6px;height:20px;background:#4f68c6;opacity:0.09"></i>
<i class="a" style="left:1697.3px;top:0;width:0.8px;height:20px;background:#4f68c6;opacity:0.18"></i>
<i class="a" style="left:1204.4px;top:0;width:0.9px;height:20px;background:#4f68c6;opacity:0.13"></i>
<i class="a" style="left:1759.8px;top:0;width:0.8px;height:20px;background:#4f68c6;opacity:0.09"></i>
<i class="a" style="left:1745.5px;top:0;width:0.8px;height:20px;background:#4f68c6;opacity:0.06"></i>
<i class="a" style="left:1691.1px;top:0;width:0.8px;height:20px;background:#4f68c6;opacity:0.17"></i>
<i class="a" style="left:1195.3px;top:0;width:0.5px;height:20px;background:#4f68c6;opacity:0.07"></i>
<i class="a" style="left:1336.9px;top:0;width:1.3px;height:20px;background:#4f68c6;opacity:0.16"></i>
<i class="a" style="left:1389.3px;top:0;width:1.2px;height:20px;background:#4f68c6;opacity:0.1"></i>
<i class="a" style="left:1566.5px;top:0;width:1.2px;height:20px;background:#4f68c6;opacity:0.1"></i>
<i class="a" style="left:1374.9px;top:0;width:1.1px;height:20px;background:#4f68c6;opacity:0.1"></i>
<i class="a" style="left:1655.5px;top:0;width:0.5px;height:20px;background:#4f68c6;opacity:0.19"></i>
<i class="a" style="left:1774.8px;top:0;width:1.0px;height:20px;background:#4f68c6;opacity:0.06"></i>
<i class="a" style="left:1476.3px;top:0;width:0.7px;height:20px;background:#4f68c6;opacity:0.19"></i>
<i class="a" style="left:1419.5px;top:0;width:1.3px;height:20px;background:#4f68c6;opacity:0.1"></i>
<i class="a" style="left:1487.9px;top:0;width:0.9px;height:20px;background:#4f68c6;opacity:0.19"></i>
<i class="a" style="left:1685.3px;top:0;width:0.7px;height:20px;background:#4f68c6;opacity:0.16"></i>
<i class="a" style="left:1665.9px;top:0;width:1.2px;height:20px;background:#4f68c6;opacity:0.15"></i>
<i class="a" style="left:1376.9px;top:0;width:0.8px;height:20px;background:#4f68c6;opacity:0.11"></i>
<i class="a" style="left:1223.4px;top:0;width:1.1px;height:20px;background:#4f68c6;opacity:0.09"></i>
<i class="a" style="left:1330.8px;top:0;width:1.1px;height:20px;background:#4f68c6;opacity:0.07"></i>
<i class="a" style="left:1525.8px;top:0;width:0.5px;height:20px;background:#4f68c6;opacity:0.11"></i>
<i class="a" style="left:1736.4px;top:0;width:1.3px;height:20px;background:#4f68c6;opacity:0.2"></i>
<i class="a" style="left:1226.7px;top:0;width:0.7px;height:20px;background:#4f68c6;opacity:0.07"></i>
<i class="a" style="left:1625.9px;top:0;width:0.9px;height:20px;background:#4f68c6;opacity:0.12"></i>
<i class="a" style="left:1439.1px;top:0;width:0.7px;height:20px;background:#4f68c6;opacity:0.15"></i>
<i class="a" style="left:1650.2px;top:0;width:1.0px;height:20px;background:#4f68c6;opacity:0.18"></i>
<i class="a" style="left:1250.3px;top:0;width:1.0px;height:20px;background:#4f68c6;opacity:0.18"></i>
<i class="a" style="left:1534.8px;top:0;width:0.8px;height:20px;background:#4f68c6;opacity:0.11"></i>
<i class="a" style="left:1300.1px;top:0;width:1.1px;height:20px;background:#4f68c6;opacity:0.09"></i>
<i class="a" style="left:1270.9px;top:0;width:0.7px;height:20px;background:#4f68c6;opacity:0.18"></i>
<i class="a" style="left:1381.2px;top:0;width:1.0px;height:20px;background:#4f68c6;opacity:0.12"></i>
<i class="a" style="left:1496.5px;top:0;width:1.3px;height:20px;background:#4f68c6;opacity:0.09"></i>
<i class="a" style="left:1589.7px;top:0;width:1.2px;height:20px;background:#4f68c6;opacity:0.2"></i>
<i class="a" style="left:1476.1px;top:0;width:0.6px;height:20px;background:#4f68c6;opacity:0.17"></i>
<i class="a" style="left:1756.2px;top:0;width:1.2px;height:20px;background:#4f68c6;opacity:0.07"></i>
<i class="a" style="left:1249.1px;top:0;width:0.7px;height:20px;background:#4f68c6;opacity:0.09"></i>
<i class="a" style="left:1544.9px;top:0;width:1.3px;height:20px;background:#4f68c6;opacity:0.19"></i>
<i class="a" style="left:1725.8px;top:0;width:0.8px;height:20px;background:#4f68c6;opacity:0.12"></i>
<i class="a" style="left:1669.4px;top:0;width:0.8px;height:20px;background:#4f68c6;opacity:0.19"></i>
<i class="a" style="left:1553.6px;top:0;width:0.6px;height:20px;background:#4f68c6;opacity:0.15"></i>
<i class="a" style="left:1408.4px;top:0;width:0.6px;height:20px;background:#4f68c6;opacity:0.08"></i>
<i class="a" style="left:1335.7px;top:0;width:0.7px;height:20px;background:#4f68c6;opacity:0.14"></i>
<i class="a" style="left:1302.8px;top:0;width:1.0px;height:20px;background:#4f68c6;opacity:0.06"></i>
<i class="a" style="left:1605.9px;top:0;width:0.8px;height:20px;background:#4f68c6;opacity:0.09"></i>
<i class="a" style="left:1302.8px;top:0;width:0.8px;height:20px;background:#4f68c6;opacity:0.17"></i>
<i class="a" style="left:1213.4px;top:0;width:0.9px;height:20px;background:#4f68c6;opacity:0.07"></i>
<i class="a" style="left:1524.1px;top:0;width:0.8px;height:20px;background:#4f68c6;opacity:0.15"></i>
<i class="a" style="left:1277.5px;top:0;width:0.6px;height:20px;background:#4f68c6;opacity:0.16"></i>
<i class="a" style="left:1353.8px;top:0;width:0.8px;height:20px;background:#4f68c6;opacity:0.1"></i>
<i class="a" style="left:1372.2px;top:0;width:1.3px;height:20px;background:#4f68c6;opacity:0.14"></i>
<i class="a" style="left:1438.8px;top:0;width:0.8px;height:20px;background:#4f68c6;opacity:0.18"></i>
<i class="a" style="left:1405.0px;top:0;width:1.3px;height:20px;background:#4f68c6;opacity:0.09"></i>
<i class="a" style="left:1302.9px;top:0;width:1.1px;height:20px;background:#4f68c6;opacity:0.06"></i>
<i class="a" style="left:1443.3px;top:0;width:1.2px;height:20px;background:#4f68c6;opacity:0.17"></i>
<i class="a" style="left:1736.4px;top:0;width:0.8px;height:20px;background:#4f68c6;opacity:0.12"></i>
<i class="a" style="left:1182.5px;top:0;width:0.6px;height:20px;background:#4f68c6;opacity:0.14"></i>
<i class="a" style="left:1753.4px;top:0;width:1.1px;height:20px;background:#4f68c6;opacity:0.07"></i>
<i class="a" style="left:1409.6px;top:0;width:1.0px;height:20px;background:#4f68c6;opacity:0.13"></i>
<i class="a" style="left:1353.9px;top:0;width:0.6px;height:20px;background:#4f68c6;opacity:0.13"></i>
<i class="a" style="left:1242.4px;top:0;width:1.2px;height:20px;background:#4f68c6;opacity:0.13"></i>
<i class="a" style="left:1789.7px;top:0;width:1.2px;height:20px;background:#4f68c6;opacity:0.09"></i>
<i class="a" style="left:1775.1px;top:0;width:0.6px;height:20px;background:#4f68c6;opacity:0.2"></i>
<i class="a" style="left:1207.1px;top:0;width:0.8px;height:20px;background:#4f68c6;opacity:0.19"></i>
<i class="a" style="left:1750.1px;top:0;width:0.8px;height:20px;background:#4f68c6;opacity:0.15"></i>
<i class="a" style="left:1275.2px;top:0;width:1.2px;height:20px;background:#4f68c6;opacity:0.17"></i>
<i class="a" style="left:1431.2px;top:0;width:0.7px;height:20px;background:#4f68c6;opacity:0.18"></i>
<i class="a" style="left:1289.7px;top:0;width:1.2px;height:20px;background:#4f68c6;opacity:0.09"></i>
<i class="a" style="left:1503.5px;top:0;width:0.8px;height:20px;background:#4f68c6;opacity:0.11"></i>
<i class="a" style="left:1330.7px;top:0;width:0.6px;height:20px;background:#4f68c6;opacity:0.16"></i>
<i class="a" style="left:1846.7px;top:0;width:1.8px;height:20px;background:#4f68c6;opacity:0.31"></i>
<i class="a" style="left:1846.6px;top:0;width:1.6px;height:20px;background:#4f68c6;opacity:0.37"></i>
<i class="a" style="left:1870.3px;top:0;width:0.8px;height:20px;background:#4f68c6;opacity:0.31"></i>
<i class="a" style="left:1857.7px;top:0;width:1.5px;height:20px;background:#4f68c6;opacity:0.28"></i>
<i class="a" style="left:1862.7px;top:0;width:1.4px;height:20px;background:#4f68c6;opacity:0.33"></i>
<i class="a" style="left:1863.3px;top:0;width:1.2px;height:20px;background:#4f68c6;opacity:0.2"></i>
<i class="a" style="left:1865.3px;top:0;width:1.5px;height:20px;background:#4f68c6;opacity:0.25"></i>
<i class="a" style="left:1877.2px;top:0;width:1.7px;height:20px;background:#4f68c6;opacity:0.29"></i>
<i class="a" style="left:1864.9px;top:0;width:0.9px;height:20px;background:#4f68c6;opacity:0.22"></i>
<i class="a" style="left:1863.2px;top:0;width:0.8px;height:20px;background:#4f68c6;opacity:0.22"></i>
<i class="a" style="left:1866.3px;top:0;width:1.2px;height:20px;background:#4f68c6;opacity:0.21"></i>
<i class="a" style="left:1848.4px;top:0;width:1.5px;height:20px;background:#4f68c6;opacity:0.35"></i>
<i class="a" style="left:1866.1px;top:0;width:1.7px;height:20px;background:#4f68c6;opacity:0.21"></i>
<i class="a" style="left:1860.8px;top:0;width:1.3px;height:20px;background:#4f68c6;opacity:0.39"></i>
</div>
<div class="dock" style="left:1px;top:105px;width:288px;height:774px;"></div>
<div class="t" style="left:19px;width:200px;text-align:center;top:111.5px;">Functions</div>
<svg class="ico" style="left:243.5px;top:110.8px" viewBox="0 0 15 15"><circle cx="7.5" cy="7.5" r="7.3" fill="#8a8a8a"/><path d="M7.5 3.4 L11.6 7.5 L7.5 11.6 L3.4 7.5 Z" fill="none" stroke="#31363b" stroke-width="1.2"/></svg>
<svg class="ico" style="left:266.5px;top:110.8px" viewBox="0 0 15 15"><circle cx="7.5" cy="7.5" r="7.3" fill="#8a8a8a"/><path d="M3.7 3.7 L11.3 11.3 M11.3 3.7 L3.7 11.3" fill="none" stroke="#31363b" stroke-width="1.2"/></svg>
<div class="a" style="left:2px;top:134px;width:271px;height:688px;background:#232629;overflow:hidden">
<div class="hdr" style="left:0;top:0;width:178px;"></div><div class="hdr" style="left:177px;top:0;width:95px;border-right:none"></div>
<div class="t" style="left:11px;top:6px;">Name</div><div class="t" style="left:188px;top:6px;">Offset</div>
<svg class="a" style="left:163.5px;top:11px" width="8" height="5"><polygon points="0,0 8,0 4,4.6" fill="#eff0f1"/></svg>
<div class="t" style="left:11px;top:32px;color:#eff0f1">w_GetModuleFileNameW</div><div class="t" style="left:181px;top:32px;color:#eff0f1">0x00401560</div>
<div class="t" style="left:11px;top:58px;color:#eff0f1">memset_</div><div class="t" style="left:181px;top:58px;color:#eff0f1">0x00401a40</div>
<div class="t" style="left:11px;top:84px;color:#eff0f1">memcpy_</div><div class="t" style="left:181px;top:84px;color:#eff0f1">0x00401a80</div>
<div class="t" style="left:11px;top:110px;color:#0d7d0d">main</div><div class="t" style="left:181px;top:110px;color:#0d7d0d">0x004041a0</div>
<div class="t" style="left:11px;top:136px;color:#eff0f1">loc.00411bdf</div><div class="t" style="left:181px;top:136px;color:#eff0f1">0x00411bdf</div>
<div class="t" style="left:11px;top:162px;color:#eff0f1">loc.0040afd9</div><div class="t" style="left:181px;top:162px;color:#eff0f1">0x0040afd9</div>
<div class="t" style="left:11px;top:188px;color:#eff0f1">loc.0040afd2</div><div class="t" style="left:181px;top:188px;color:#eff0f1">0x0040afd2</div>
<div class="t" style="left:11px;top:214px;color:#eff0f1">loc.00408b0d</div><div class="t" style="left:181px;top:214px;color:#eff0f1">0x00408b0d</div>
<div class="a" style="left:8px;top:234px;width:263px;height:26px;background:#18465d"></div>
<div class="t" style="left:11px;top:240px;color:#eff0f1">load_ntdll_or_kernel32</div><div class="t" style="left:181px;top:240px;color:#eff0f1">0x004013b0</div>
<div class="t" style="left:11px;top:266px;color:#eff0f1">get_resource</div><div class="t" style="left:181px;top:266px;color:#eff0f1">0x00401c90</div>
<div class="t" style="left:11px;top:292px;color:#eff0f1">fcn.DialogFunc</div><div class="t" style="left:181px;top:292px;color:#eff0f1">0x00403a40</div>
<div class="t" style="left:11px;top:318px;color:#eff0f1">fcn.00411f90</div><div class="t" style="left:181px;top:318px;color:#eff0f1">0x00411f90</div>
<div class="t" style="left:11px;top:344px;color:#eff0f1">fcn.00411d80</div><div class="t" style="left:181px;top:344px;color:#eff0f1">0x00411d80</div>
<div class="t" style="left:11px;top:370px;color:#eff0f1">fcn.00411d29</div><div class="t" style="left:181px;top:370px;color:#eff0f1">0x00411d29</div>
<div class="t" style="left:11px;top:396px;color:#eff0f1">fcn.00411ce0</div><div class="t" style="left:181px;top:396px;color:#eff0f1">0x00411ce0</div>
<div class="t" style="left:11px;top:422px;color:#eff0f1">fcn.00411c00</div><div class="t" style="left:181px;top:422px;color:#eff0f1">0x00411c00</div>
<div class="t" style="left:11px;top:448px;color:#eff0f1">fcn.00411b40</div><div class="t" style="left:181px;top:448px;color:#eff0f1">0x00411b40</div>
<div class="t" style="left:11px;top:474px;color:#eff0f1">fcn.00411af0</div><div class="t" style="left:181px;top:474px;color:#eff0f1">0x00411af0</div>
<div class="t" style="left:11px;top:500px;color:#eff0f1">fcn.00411ae2</div><div class="t" style="left:181px;top:500px;color:#eff0f1">0x00411ae2</div>
<div class="t" style="left:11px;top:526px;color:#eff0f1">fcn.00411adc</div><div class="t" style="left:181px;top:526px;color:#eff0f1">0x00411adc</div>
<div class="t" style="left:11px;top:552px;color:#eff0f1">fcn.00411a38</div><div class="t" style="left:181px;top:552px;color:#eff0f1">0x00411a38</div>
<div class="t" style="left:11px;top:578px;color:#eff0f1">fcn.004119da</div><div class="t" style="left:181px;top:578px;color:#eff0f1">0x004119da</div>
<div class="t" style="left:11px;top:604px;color:#eff0f1">fcn.004119ab</div><div class="t" style="left:181px;top:604px;color:#eff0f1">0x004119ab</div>
<div class="t" style="left:11px;top:630px;color:#eff0f1">fcn.004118d7</div><div class="t" style="left:181px;top:630px;color:#eff0f1">0x004118d7</div>
<div class="t" style="left:11px;top:656px;color:#eff0f1">fcn.00411835</div><div class="t" style="left:181px;top:656px;color:#eff0f1">0x00411835</div>
<div class="t" style="left:11px;top:682px;color:#eff0f1">fcn.00411806</div><div class="t" style="left:181px;top:682px;color:#eff0f1">0x00411806</div>
</div>
<svg class="a" style="left:276px;top:138.5px" width="8" height="7"><polygon points="4.0,0 8,7 0,7" fill="#9a9a9a"/></svg>
<div class="sbv" style="left:276px;top:149px;height:658px;"></div><div class="sbh" style="left:276px;top:149px;height:40px;"></div>
<svg class="a" style="left:276px;top:810.5px" width="8" height="7"><polygon points="0,0 8,0 4.0,7" fill="#9a9a9a"/></svg>
<div class="a" style="left:273px;top:822px;width:15px;height:15px;background:#232629"></div>
<svg class="a" style="left:6.5px;top:825px" width="7" height="8"><polygon points="7,0 7,8 0,4.0" fill="#9a9a9a"/></svg>
<svg class="a" style="left:261.5px;top:825px" width="7" height="8"><polygon points="0,0 7,4.0 0,8" fill="#9a9a9a"/></svg>
<div class="a" style="left:17px;top:825px;width:241px;height:9px;background:#2a2929;border-radius:4px"></div><div class="a" style="left:17px;top:825px;width:75px;height:9px;background:#605f5f;border-radius:4px"></div>
<div class="a" style="left:2px;top:841px;width:249px;height:32px;box-sizing:border-box;border:1px solid #76797c;border-radius:3px;background:#232629"></div>
<div class="t" style="left:10px;top:850px;color:#8b8d8f;">Quick Filter</div>
<div class="a" style="left:254px;top:840px;width:31px;height:35px;background:#3a3b3c"></div><div class="t" style="left:254px;width:31px;text-align:center;top:851px;">X</div>
<div class="dock" style="left:292px;top:105px;width:1627px;height:737px;"></div>
<div class="t" style="left:880px;width:400px;text-align:center;top:111.5px;">Graph (load_ntdll_or_kernel32)</div>
<svg class="ico" style="left:1873.5px;top:110.8px" viewBox="0 0 15 15"><circle cx="7.5" cy="7.5" r="7.3" fill="#8a8a8a"/><path d="M7.5 3.4 L11.6 7.5 L7.5 11.6 L3.4 7.5 Z" fill="none" stroke="#31363b" stroke-width="1.2"/></svg>
<svg class="ico" style="left:1896.5px;top:110.8px" viewBox="0 0 15 15"><circle cx="7.5" cy="7.5" r="7.3" fill="#8a8a8a"/><path d="M3.7 3.7 L11.3 11.3 M11.3 3.7 L3.7 11.3" fill="none" stroke="#31363b" stroke-width="1.2"/></svg>
<div class="a" style="left:293px;top:134px;width:1625px;height:707px;box-sizing:border-box;border:1px solid #3daee9;border-radius:2px"></div>
<div class="a" style="left:294px;top:135px;width:1608px;height:705px;box-sizing:border-box;border:solid #949292;border-width:1px 2px 2px 1px;background:#232629"></div>
<svg class="a" style="left:1905px;top:138.5px" width="8" height="7"><polygon points="4.0,0 8,7 0,7" fill="#9a9a9a"/></svg>
<div class="sbv" style="left:1905px;top:150px;height:675px;"></div><div class="sbh" style="left:1905px;top:226px;height:599px;"></div>
<svg class="a" style="left:1905px;top:828.5px" width="8" height="7"><polygon points="0,0 8,0 4.0,7" fill="#9a9a9a"/></svg>
<div class="shd" style="left:895px;top:167px;width:408px;height:220px"></div>
<div class="blk" style="left:891px;top:163px;width:405px;height:217px;background:#1c1f24"></div>
<div class="ln" style="left:915px;top:180px"><span class="y">(fcn) load_ntdll_or_kernel32 71</span></div>
<div class="ln" style="left:915px;top:198px"><span class="y">  load_ntdll_or_kernel32 (int arg_8h);</span></div>
<div class="ln" style="left:915px;top:216px"><span class="cm">; var int local_4h @ ebp-0x4</span></div>
<div class="ln" style="left:915px;top:234px"><span class="cm">; arg int arg_8h @ ebp+0x8</span></div>
<div class="ln" style="left:915px;top:252px"><span class="ad">0x004013b0</span>           <span class="w">push ebp</span></div>
<div class="ln" style="left:915px;top:270px"><span class="ad">0x004013b1</span>           <span class="w">mov ebp, esp</span></div>
<div class="ln" style="left:915px;top:288px"><span class="ad">0x004013b3</span>           <span class="w">push ecx</span></div>
<div class="ln" style="left:915px;top:306px"><span class="ad">0x004013b4</span>           <span class="w">movzx eax, byte [arg_8h]</span></div>
<div class="ln" style="left:915px;top:324px"><span class="ad">0x004013b8</span>           <span class="w">test eax, eax</span></div>
<div class="ln" style="left:915px;top:342px"><span class="ad">0x004013ba</span>           <span class="bl">je 0x4013d7</span></div>
<div class="shd" style="left:670px;top:463px;width:416px;height:184px"></div>
<div class="blk" style="left:666px;top:459px;width:413px;height:181px;background:#1c1f24"></div>
<div class="ln" style="left:690px;top:476px"><span class="ad">0x004013bc</span>           <span class="w">push 0xc</span></div>
<div class="ln" style="left:690px;top:494px"><span class="ad">0x004013be</span>           <span class="w">push 0x41b898</span></div>
<div class="ln" style="left:690px;top:512px"><span class="ad">0x004013c3</span>           <span class="pk">call decryption_function</span></div>
<div class="ln" style="left:690px;top:530px"><span class="ad">0x004013c8</span>           <span class="w">add esp, 8</span></div>
<div class="ln" style="left:690px;top:548px"><span class="ad">0x004013cb</span>           <span class="w">push eax</span></div>
<div class="ln" style="left:690px;top:566px"><span class="ad">0x004013cc</span>           <span class="pk">call LoadLibraryA</span></div>
<div class="ln" style="left:690px;top:584px"><span class="ad">0x004013d2</span>           <span class="w">mov dword [local_4h], eax</span></div>
<div class="ln" style="left:690px;top:602px"><span class="ad">0x004013d5</span>           <span class="bl">jmp 0x4013f0</span></div>
<div class="shd" style="left:1117px;top:463px;width:416px;height:166px"></div>
<div class="blk" style="left:1113px;top:459px;width:413px;height:163px;background:#1c1f24"></div>
<div class="ln" style="left:1137px;top:476px"><span class="ad">0x004013d7</span>           <span class="w">push 9</span></div>
<div class="ln" style="left:1137px;top:494px"><span class="ad">0x004013d9</span>           <span class="w">push 0x41bb9c</span></div>
<div class="ln" style="left:1137px;top:512px"><span class="ad">0x004013de</span>           <span class="pk">call decryption_function</span></div>
<div class="ln" style="left:1137px;top:530px"><span class="ad">0x004013e3</span>           <span class="w">add esp, 8</span></div>
<div class="ln" style="left:1137px;top:548px"><span class="ad">0x004013e6</span>           <span class="w">push eax</span></div>
<div class="ln" style="left:1137px;top:566px"><span class="ad">0x004013e7</span>           <span class="pk">call LoadLibraryA</span></div>
<div class="ln" style="left:1137px;top:584px"><span class="ad">0x004013ed</span>           <span class="w">mov dword [local_4h], eax</span></div>
<div class="shd" style="left:1117px;top:683px;width:416px;height:112px"></div>
<div class="blk" style="left:1113px;top:678px;width:413px;height:110px;background:#2c3335"></div>
<div class="a" style="left:1121px;top:749px;width:386px;height:18px;background:#161c1d"></div>
<div class="ln" style="left:1137px;top:696px"><span class="ad">0x004013f0</span>           <span class="w">mov eax, dword [local_4h]</span></div>
<div class="ln" style="left:1137px;top:714px"><span class="ad">0x004013f3</span>           <span class="w">mov esp, ebp</span></div>
<div class="ln" style="left:1137px;top:732px"><span class="ad">0x004013f5</span>           <span class="w">pop ebp</span></div>
<div class="ln" style="left:1137px;top:750px"><span class="ad">0x004013f6</span>           <span class="bl">ret</span></div>
<svg class="a" style="left:295px;top:136px" width="1605" height="702" viewBox="295 136 1605 702"><path d="M1088 380 V399 H872 V453" fill="none" stroke="#b84a22" stroke-width="1.6"/><polygon points="868.5,451.5 875.5,451.5 872,458.5" fill="#e0511a"/><path d="M1098 380 V438.5 H1314 V453" fill="none" stroke="#43a82c" stroke-width="1.6"/><polygon points="1310.5,451.5 1317.5,451.5 1314,458.5" fill="#4bdc2c"/><path d="M872 640 V659 H1314 V672" fill="none" stroke="#3a94b8" stroke-width="1.8"/><polygon points="1310.5,671.5 1317.5,671.5 1314,678.5" fill="#3fc1f5"/><path d="M1324 622 V672" fill="none" stroke="#3a94b8" stroke-width="1.8"/><polygon points="1320.5,671.5 1327.5,671.5 1324,678.5" fill="#3fc1f5"/></svg>
<div class="tab" style="left:291px;width:80px">Dashboard</div>
<div class="tab" style="left:370px;width:90px">Disassembly</div>
<div class="tab" style="left:459px;width:201px"></div>
<div class="tab" style="left:659px;width:72px">Hexdump</div>
<div class="tab" style="left:730px;width:89px">Pseudocode</div>
<div class="tab" style="left:818px;width:86px">Entry Points</div>
<div class="tab" style="left:903px;width:70px">Strings</div>
<div class="tab" style="left:972px;width:69px">Imports</div>
<div class="tab" style="left:1040px;width:69px">Symbols</div>
<div class="tab" style="left:1108px;width:76px">Resources</div>
<div class="tab" style="left:1183px;width:68px">Jupyter</div>
<div class="tab sel" style="left:460px;width:199px">Graph (load_ntdll_or_kernel32)</div>
<div class="dock" style="left:1px;top:882px;width:712px;height:173px;"></div>
<div class="t" style="left:231px;width:200px;text-align:center;top:889px;">Console</div>
<svg class="ico" style="left:667.5px;top:887.5px" viewBox="0 0 15 15"><circle cx="7.5" cy="7.5" r="7.3" fill="#8a8a8a"/><path d="M7.5 3.4 L11.6 7.5 L7.5 11.6 L3.4 7.5 Z" fill="none" stroke="#31363b" stroke-width="1.2"/></svg>
<svg class="ico" style="left:690.5px;top:887.5px" viewBox="0 0 15 15"><circle cx="7.5" cy="7.5" r="7.3" fill="#8a8a8a"/><path d="M3.7 3.7 L11.3 11.3 M11.3 3.7 L3.7 11.3" fill="none" stroke="#31363b" stroke-width="1.2"/></svg>
<div class="a" style="left:2px;top:911px;width:695px;height:107px;background:#232629"></div>
<div class="ln" style="left:20px;top:922px;color:#eff0f1">&gt; Populating UI</div>
<div class="ln" style="left:20px;top:940px;color:#eff0f1">&gt; Finished, happy reversing :)</div>
<div class="ln" style="left:20px;top:958px;color:#eff0f1"></div>
<div class="ln" style="left:20px;top:976px;color:#eff0f1">-- r2 talks to you. tries to make you feel well.</div>
<svg class="a" style="left:700px;top:915px" width="8" height="7"><polygon points="4.0,0 8,7 0,7" fill="#9a9a9a"/></svg>
<div class="sbv" style="left:700px;top:926px;height:78px;"></div><div class="sbh" style="left:700px;top:926px;height:62px;"></div>
<svg class="a" style="left:700px;top:1007px" width="8" height="7"><polygon points="0,0 8,0 4.0,7" fill="#9a9a9a"/></svg>
<div class="a" style="left:6px;top:1021px;width:658px;height:32px;box-sizing:border-box;border:1px solid #76797c;border-radius:3px;background:#232629"></div>
<div class="t" style="left:27px;top:1030px;color:#8b8d8f;">Type &quot;?&quot; for help</div>
<div class="a" style="left:671px;top:1024px;width:36px;height:25px;background:#fff;border-radius:5px;"><svg width="36" height="25" viewBox="0 0 36 25" style="position:absolute;left:0;top:0"><path d="M18.2 5.9 L24.4 12.4 L18.2 18.9" stroke="#333" stroke-width="3.9" fill="none"/><path d="M24.3 12.4 H11" stroke="#333" stroke-width="4.2" fill="none"/></svg></div>
<div class="dock" style="left:716px;top:882px;width:1203px;height:137px;"></div>
<div class="t" style="left:1191px;width:200px;text-align:center;top:889px;">Sections</div>
<svg class="ico" style="left:1873.5px;top:887.5px" viewBox="0 0 15 15"><circle cx="7.5" cy="7.5" r="7.3" fill="#8a8a8a"/><path d="M7.5 3.4 L11.6 7.5 L7.5 11.6 L3.4 7.5 Z" fill="none" stroke="#31363b" stroke-width="1.2"/></svg>
<svg class="ico" style="left:1896.5px;top:887.5px" viewBox="0 0 15 15"><circle cx="7.5" cy="7.5" r="7.3" fill="#8a8a8a"/><path d="M3.7 3.7 L11.3 11.3 M11.3 3.7 L3.7 11.3" fill="none" stroke="#31363b" stroke-width="1.2"/></svg>
<div class="a" style="left:717px;top:937px;width:919px;height:81px;background:#232629"></div>
<div class="hdr" style="left:717px;top:911px;width:80px;height:26px"></div><div class="hdr" style="left:796px;top:911px;width:51px;height:26px"></div><div class="hdr" style="left:846px;top:911px;width:88px;height:26px"></div><div class="hdr" style="left:933px;top:911px;width:89px;height:26px"></div><div class="hdr" style="left:1021px;top:911px;width:615px;height:26px"></div>
<div class="t" style="left:728px;top:917px;">Name</div>
<div class="t" style="left:807px;top:917px;">Size</div>
<div class="t" style="left:857px;top:917px;">Address</div>
<div class="t" style="left:944px;top:917px;">EndAddress</div>
<div class="t" style="left:1032px;top:917px;">Entropy</div>
<svg class="a" style="left:782.5px;top:921.5px" width="8" height="5"><polygon points="0,4.6 8,4.6 4,0" fill="#eff0f1"/></svg>
<div class="a" style="left:730px;top:942px;width:16px;height:16px;background:#3498db"></div>
<div class="t" style="left:752px;top:943px;">.data</div>
<div class="t" style="left:800px;top:943px;">8704</div>
<div class="t" style="left:850px;top:943px;">0x0041b000</div>
<div class="t" style="left:937px;top:943px;">0x0041d200</div>
<div class="t" style="left:1025px;top:943px;">3.28480039</div>
<div class="a" style="left:730px;top:968px;width:16px;height:16px;background:#2ecc71"></div>
<div class="t" style="left:752px;top:969px;">.rdata</div>
<div class="t" style="left:800px;top:969px;">30208</div>
<div class="t" style="left:850px;top:969px;">0x00413000</div>
<div class="t" style="left:937px;top:969px;">0x0041a600</div>
<div class="t" style="left:1025px;top:969px;">5.08320213</div>
<div class="a" style="left:730px;top:994px;width:16px;height:16px;background:#34495e"></div>
<div class="t" style="left:752px;top:995px;">.reloc</div>
<div class="t" style="left:800px;top:995px;">5120</div>
<div class="t" style="left:850px;top:995px;">0x00432000</div>
<div class="t" style="left:937px;top:995px;">0x00433400</div>
<div class="t" style="left:1025px;top:995px;">6.47993944</div>
<svg class="a" style="left:1639px;top:915px" width="8" height="7"><polygon points="4.0,0 8,7 0,7" fill="#9a9a9a"/></svg>
<div class="sbv" style="left:1639px;top:926px;height:77px;"></div><div class="sbh" style="left:1639px;top:926px;height:45px;"></div>
<svg class="a" style="left:1639px;top:1006.5px" width="8" height="7"><polygon points="0,0 8,0 4.0,7" fill="#9a9a9a"/></svg>
<svg class="a" style="left:1906px;top:915px" width="8" height="7"><polygon points="4.0,0 8,7 0,7" fill="#9a9a9a"/></svg>
<div class="sbv" style="left:1906px;top:926px;height:77px;"></div><div class="sbh" style="left:1906px;top:926px;height:54px;"></div>
<svg class="a" style="left:1906px;top:1006.5px" width="8" height="7"><polygon points="0,0 8,0 4.0,7" fill="#9a9a9a"/></svg>
<svg class="a" style="left:1655px;top:911px" width="110" height="106" viewBox="1655 911 110 106"><path d="M1708.5 964.3 L1754.20 964.30 A45.7 45.7 0 0 1 1677.22 997.61 Z" fill="#1abc9c" stroke="#fff" stroke-width="1.9" stroke-linejoin="round"/><path d="M1708.5 964.3 L1677.22 997.61 A45.7 45.7 0 0 1 1714.78 919.03 Z" fill="#9b59b6" stroke="#fff" stroke-width="1.9" stroke-linejoin="round"/><path d="M1708.5 964.3 L1714.78 919.03 A45.7 45.7 0 0 1 1722.24 920.72 Z" fill="#34495e" stroke="#fff" stroke-width="1.9" stroke-linejoin="round"/><path d="M1708.5 964.3 L1722.24 920.72 A45.7 45.7 0 0 1 1752.68 952.63 Z" fill="#2ecc71" stroke="#fff" stroke-width="1.9" stroke-linejoin="round"/><path d="M1708.5 964.3 L1752.68 952.63 A45.7 45.7 0 0 1 1754.20 964.30 Z" fill="#3498db" stroke="#fff" stroke-width="1.9" stroke-linejoin="round"/><circle cx="1709.9" cy="966" r="21.8" fill="none" stroke="#fff" stroke-width="1.8"/></svg>
<div class="tab" style="left:783px;top:1023px;width:79px;height:31px">Comments</div><div class="tab sel" style="left:715px;top:1023px;width:68px;height:31px">Sections</div>
<div class="a" style="left:0;top:1054px;width:1920px;height:2px;background:linear-gradient(#2f3439,#2a2e32)"></div>
</body></html>
